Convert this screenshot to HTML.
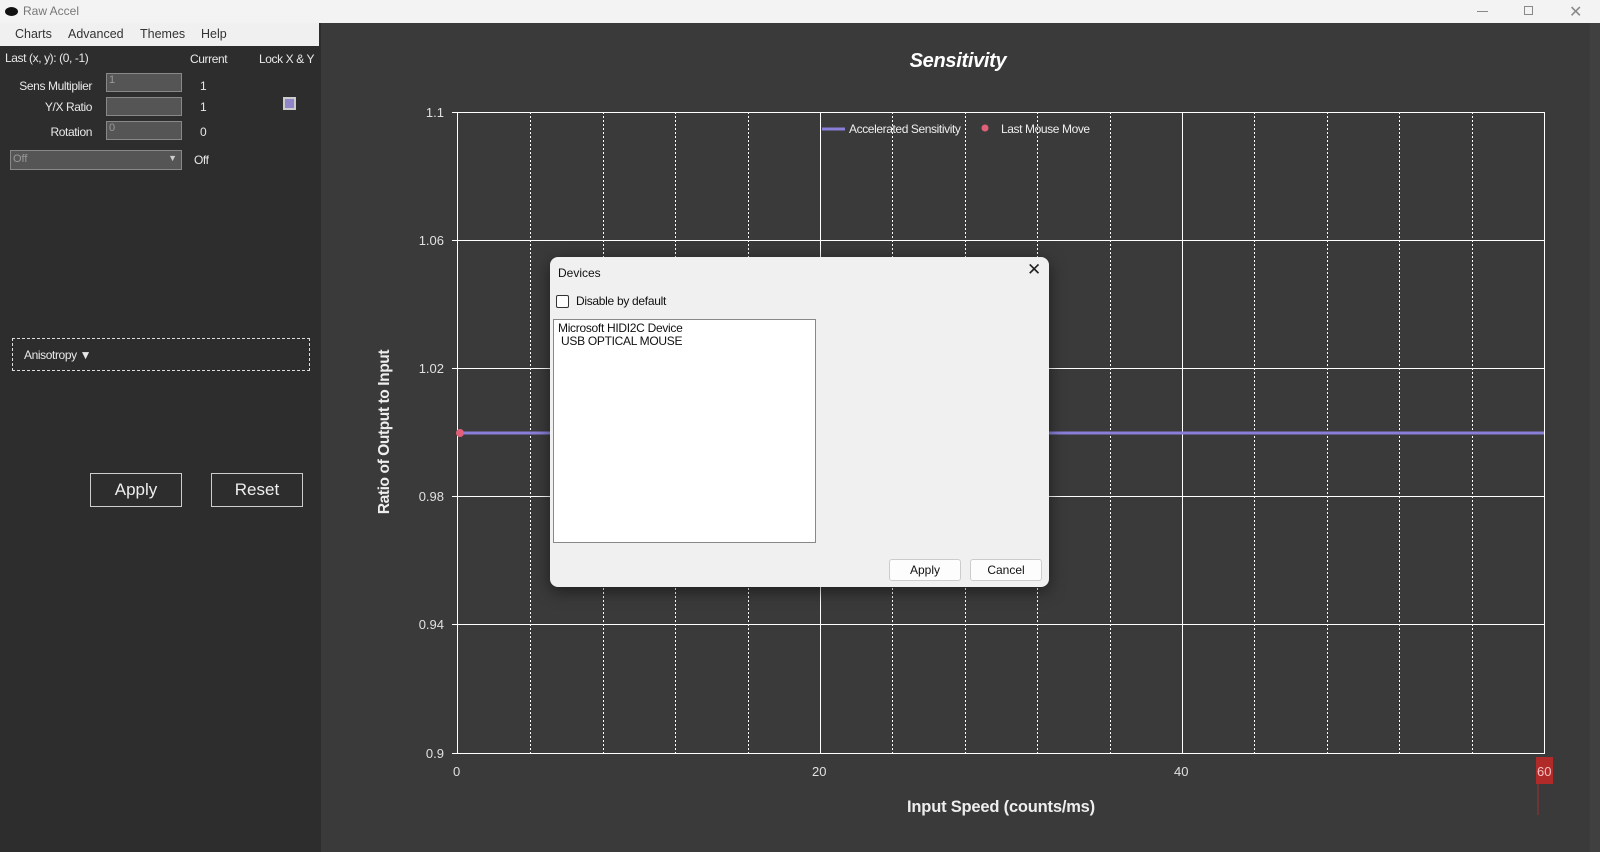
<!DOCTYPE html>
<html><head><meta charset="utf-8"><style>
*{margin:0;padding:0;box-sizing:border-box}
body{width:1600px;height:852px;overflow:hidden;background:#3a3a3a;font-family:"Liberation Sans",sans-serif;position:relative}
.a{position:absolute;white-space:nowrap}
.w{color:#e8e8e8;font-size:12px;letter-spacing:-0.4px}
.inp{position:absolute;background:#555;border:1px solid #888;color:#999;font-size:11px;padding-left:2px}
.btn{position:absolute;border:1px solid #ccc;color:#eee;font-size:17px;text-align:center}
.tick{color:#e0e0e0;font-size:13px}
</style></head><body>
<div class="a" style="left:0;top:0;width:1600px;height:23px;background:#f3f3f3"></div>
<div class="a" style="left:5px;top:7px;width:13px;height:9px;border-radius:50%;background:#111"></div>
<div class="a" style="left:23px;top:4px;font-size:12px;color:#777">Raw Accel</div>
<div class="a" style="left:1477px;top:11px;width:11px;height:1px;background:#888"></div>
<div class="a" style="left:1524px;top:6px;width:9px;height:9px;border:1px solid #888"></div>
<div class="a" style="left:1569px;top:2px;font-size:16px;color:#888">✕</div>
<div class="a" style="left:0;top:23px;width:321px;height:829px;background:#2d2d2d"></div>
<div class="a" style="left:0;top:23px;width:319px;height:23px;background:#f0f0f0;font-size:12.5px;color:#333">
<span class="a" style="left:15px;top:4px">Charts</span><span class="a" style="left:68px;top:4px">Advanced</span><span class="a" style="left:140px;top:4px">Themes</span><span class="a" style="left:201px;top:4px">Help</span></div>
<div class="a w" style="left:5px;top:51px">Last (x, y): (0, -1)</div>
<div class="a w" style="left:190px;top:52px">Current</div>
<div class="a w" style="left:259px;top:52px">Lock X &amp; Y</div>
<div class="a w" style="left:0;width:92px;text-align:right;top:79px">Sens Multiplier</div>
<div class="a w" style="left:0;width:92px;text-align:right;top:100px">Y/X Ratio</div>
<div class="a w" style="left:0;width:92px;text-align:right;top:125px">Rotation</div>
<div class="inp" style="left:106px;top:73px;width:76px;height:19px">1</div>
<div class="inp" style="left:106px;top:97px;width:76px;height:19px"></div>
<div class="inp" style="left:106px;top:121px;width:76px;height:19px">0</div>
<div class="a w" style="left:200px;top:79px">1</div>
<div class="a w" style="left:200px;top:100px">1</div>
<div class="a w" style="left:200px;top:125px">0</div>
<div class="a" style="left:283px;top:97px;width:13px;height:13px;background:#8f85c8;border:2px solid #ccc"></div>
<div class="inp" style="left:10px;top:150px;width:172px;height:20px;padding-top:2px">Off<span class="a" style="right:4px;top:2px;color:#ccc;font-size:9px">▼</span></div>
<div class="a w" style="left:194px;top:153px">Off</div>
<div class="a" style="left:12px;top:338px;width:298px;height:33px;border:1px dashed #ddd"></div>
<div class="a w" style="left:24px;top:348px">Anisotropy ▼</div>
<div class="btn" style="left:90px;top:473px;width:92px;height:34px;line-height:32px">Apply</div>
<div class="btn" style="left:211px;top:473px;width:92px;height:34px;line-height:32px">Reset</div>
<div class="a" style="left:1590px;top:23px;width:10px;height:829px;background:#404040"></div>

<svg class="a" style="left:0;top:0" width="1600" height="852">
<g stroke="#fff" stroke-width="1" stroke-dasharray="2,2">
<line x1="530.5" y1="112" x2="530.5" y2="753"/><line x1="603.5" y1="112" x2="603.5" y2="753"/><line x1="675.5" y1="112" x2="675.5" y2="753"/><line x1="748.5" y1="112" x2="748.5" y2="753"/>
<line x1="892.5" y1="112" x2="892.5" y2="753"/><line x1="965.5" y1="112" x2="965.5" y2="753"/><line x1="1037.5" y1="112" x2="1037.5" y2="753"/><line x1="1110.5" y1="112" x2="1110.5" y2="753"/>
<line x1="1254.5" y1="112" x2="1254.5" y2="753"/><line x1="1327.5" y1="112" x2="1327.5" y2="753"/><line x1="1399.5" y1="112" x2="1399.5" y2="753"/><line x1="1472.5" y1="112" x2="1472.5" y2="753"/>
</g>
<g stroke="#fff" stroke-width="1">
<line x1="457.5" y1="112" x2="457.5" y2="753"/><line x1="820.5" y1="112" x2="820.5" y2="753"/><line x1="1182.5" y1="112" x2="1182.5" y2="753"/><line x1="1544.5" y1="112" x2="1544.5" y2="753"/>
<line x1="452" y1="112.5" x2="1545" y2="112.5"/><line x1="452" y1="240.5" x2="1545" y2="240.5"/><line x1="452" y1="368.5" x2="1545" y2="368.5"/><line x1="452" y1="496.5" x2="1545" y2="496.5"/><line x1="452" y1="624.5" x2="1545" y2="624.5"/><line x1="452" y1="753.5" x2="1545" y2="753.5"/>
</g>
<line x1="457" y1="433" x2="1544" y2="433" stroke="#8a7fd8" stroke-width="3"/>
<circle cx="460" cy="433" r="4" fill="#e0607a"/>
<line x1="822" y1="129" x2="845" y2="129" stroke="#8a7fd8" stroke-width="3"/>
<circle cx="985" cy="128" r="3.5" fill="#e0607a"/>
<rect x="1536" y="757" width="17" height="27" fill="#b02a2a"/>
<line x1="1538" y1="784" x2="1538" y2="815" stroke="#a03030"/>
<text x="389" y="432" transform="rotate(-90 389 432)" fill="#eee" font-size="15.5" font-weight="bold" letter-spacing="-0.4" font-family="Liberation Sans" text-anchor="middle">Ratio of Output to Input</text>
</svg>
<div class="a" style="left:858px;top:50px;width:200px;text-align:center;color:#fff;font-size:20px;font-style:italic;font-weight:bold;letter-spacing:-0.3px">Sensitivity</div>
<div class="a" style="left:849px;top:122px;font-size:12px;color:#eee;letter-spacing:-0.4px">Accelerated Sensitivity</div>
<div class="a" style="left:1001px;top:122px;font-size:12px;color:#eee;letter-spacing:-0.4px">Last Mouse Move</div>
<div class="a tick" style="left:400px;width:44px;text-align:right;top:105px">1.1</div>
<div class="a tick" style="left:400px;width:44px;text-align:right;top:233px">1.06</div>
<div class="a tick" style="left:400px;width:44px;text-align:right;top:361px">1.02</div>
<div class="a tick" style="left:400px;width:44px;text-align:right;top:489px">0.98</div>
<div class="a tick" style="left:400px;width:44px;text-align:right;top:617px">0.94</div>
<div class="a tick" style="left:400px;width:44px;text-align:right;top:746px">0.9</div>
<div class="a tick" style="left:453px;top:764px">0</div>
<div class="a tick" style="left:812px;top:764px">20</div>
<div class="a tick" style="left:1174px;top:764px">40</div>
<div class="a tick" style="left:1537px;top:764px;color:#f4c0c0">60</div>
<div class="a" style="left:850px;top:798px;width:302px;text-align:center;color:#eee;font-size:16.5px;font-weight:bold;letter-spacing:-0.2px">Input Speed (counts/ms)</div>

<div class="a" style="left:550px;top:257px;width:499px;height:330px;background:#f0f0f0;border-radius:8px;box-shadow:0 4px 16px rgba(0,0,0,.5);font-size:12px;color:#111">
<div class="a" style="left:8px;top:9px">Devices</div>
<div class="a" style="left:477px;top:3px;font-size:17px;color:#222">✕</div>
<div class="a" style="left:6px;top:38px;width:13px;height:13px;border:1px solid #333;border-radius:2px;background:#fff"></div>
<div class="a" style="left:26px;top:37px;letter-spacing:-0.3px">Disable by default</div>
<div class="a" style="left:3px;top:62px;width:263px;height:224px;background:#fff;border:1px solid #888;padding:2px 4px;line-height:13px;font-size:12px;letter-spacing:-0.3px">Microsoft HIDI2C Device<br>&nbsp;USB OPTICAL MOUSE</div>
<div class="a" style="left:339px;top:302px;width:72px;height:22px;background:#fdfdfd;border:1px solid #ccc;border-radius:3px;text-align:center;line-height:20px">Apply</div>
<div class="a" style="left:420px;top:302px;width:72px;height:22px;background:#fdfdfd;border:1px solid #ccc;border-radius:3px;text-align:center;line-height:20px">Cancel</div>
</div>
</body></html>
